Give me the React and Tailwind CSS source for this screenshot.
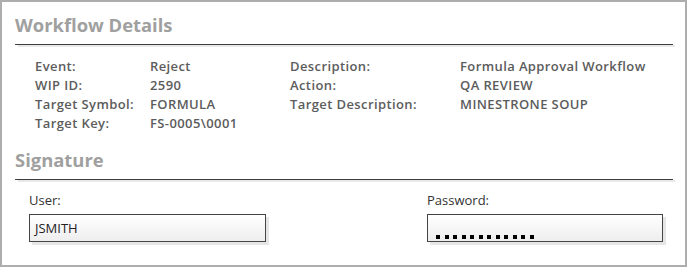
const details = [
  ['Event:', 'Reject', 'Description:', 'Formula Approval Workflow'],
  ['WIP ID:', '2590', 'Action:', 'QA REVIEW'],
  ['Target Symbol:', 'FORMULA', 'Target Description:', 'MINESTRONE SOUP'],
  ['Target Key:', 'FS-0005\\0001', '', ''],
]

const SectionTitle = ({ children, className = '' }) => (
  <div className={className}>
    <h2 className="text-[18.4px] leading-[24px] font-bold text-[#a0a0a0]">{children}</h2>
    <div className="mt-[7px] h-px bg-[#3c3c3c]" />
    <div className="ml-[3px] -mr-[2px] h-[2px] bg-[#e9e9e9]" />
  </div>
)

const Field = ({ label, width, children }) => (
  <div style={{ width }}>
    <div className="text-[13px] leading-[16px] text-[#333]">{label}</div>
    <div className="mt-[6px] relative h-[28px]">
      <div className="absolute left-[3px] top-[3px] w-full h-[28px] bg-[#e6e6e6]" />
      <div className="relative h-full border border-[#454545] bg-gradient-to-b from-white to-[#eeeeee] px-[5px]">
        {children}
      </div>
    </div>
  </div>
)

export default function App() {
  return (
    <div
      className="w-[687px] h-[267px] bg-white border-2 border-[#adadad] pl-[13px] pr-[12px] pt-[11px]"
      style={{ fontFamily: '"Open Sans", "Noto Sans", sans-serif' }}
    >
      <SectionTitle>Workflow Details</SectionTitle>

      <div className="mt-[10px] pl-[20px] grid grid-cols-[115px_140px_170px_1fr] text-[13px] leading-[19px] font-semibold tracking-[0.4px] text-[#5c5c5c]">
        {details.map((row, i) =>
          row.map((cell, j) => <div key={`${i}-${j}`}>{cell}</div>)
        )}
      </div>

      <SectionTitle className="mt-[15px]">Signature</SectionTitle>

      <div className="mt-[10px] flex justify-between pl-[14px] pr-[10px]">
        <Field label="User:" width={237}>
          <div className="text-[13px] leading-[26px] text-[#222]">JSMITH</div>
        </Field>
        <Field label="Password:" width={236}>
          <div className="flex gap-[4.5px] pt-[20px] pl-[3px]">
            {Array.from({ length: 12 }).map((_, i) => (
              <span key={i} className="w-[4px] h-[4px] bg-black" />
            ))}
          </div>
        </Field>
      </div>
    </div>
  )
}
